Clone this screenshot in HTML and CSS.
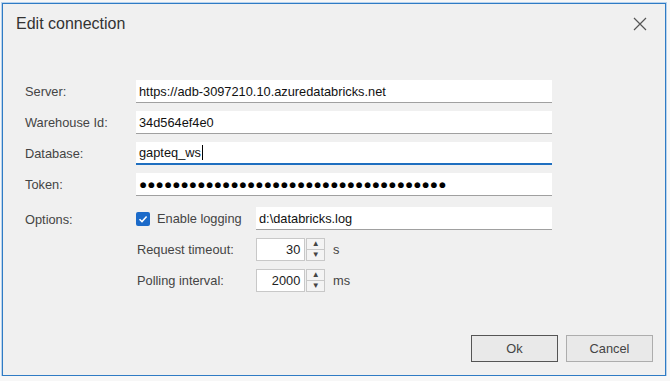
FILE: index.html
```html
<!DOCTYPE html>
<html lang="en">
<head>
    <meta charset="UTF-8">
    <title>Edit connection</title>
    <link rel="stylesheet" href="styles.css">
</head>
<body>
    <div class="window">
        <!-- title bar -->
        <div class="titlebar">
            <span class="title">Edit connection</span>
            <svg class="close" width="14" height="14" viewBox="0 0 14 14">
                <path d="M1 1 L13 13 M13 1 L1 13" stroke="#555" stroke-width="1.2" fill="none"/>
            </svg>
        </div>

        <!-- form -->
        <div class="form">
            <label>Server:</label>
            <div class="field">https://adb-3097210.10.azuredatabricks.net</div>

            <label>Warehouse Id:</label>
            <div class="field">34d564ef4e0</div>

            <label>Database:</label>
            <div class="field focused">gapteq_ws<span class="caret"></span></div>

            <label>Token:</label>
            <div class="field token">●●●●●●●●●●●●●●●●●●●●●●●●●●●●●●●●●●●●●</div>

            <label class="opt-label">Options:</label>
            <div class="options">
                <div class="log-row">
                    <span class="check">
                        <svg width="14" height="14" viewBox="0 0 14 14">
                            <rect x="0" y="0" width="14" height="14" rx="2" fill="#1b6ac9"/>
                            <path d="M3.5 7.2 L6 9.6 L10.6 4.6" stroke="#fff" stroke-width="1.5" fill="none"/>
                        </svg>
                        Enable logging
                    </span>
                    <div class="field">d:\databricks.log</div>
                </div>
                <div class="spin-row">
                    <span class="sub-label">Request timeout:</span>
                    <div class="spinner">
                        <div class="spin-value">30</div>
                        <div class="spin-btns"><span>&#9650;</span><span>&#9660;</span></div>
                    </div>
                    <span class="unit">s</span>
                </div>
                <div class="spin-row">
                    <span class="sub-label">Polling interval:</span>
                    <div class="spinner">
                        <div class="spin-value">2000</div>
                        <div class="spin-btns"><span>&#9650;</span><span>&#9660;</span></div>
                    </div>
                    <span class="unit">ms</span>
                </div>
            </div>
        </div>

        <!-- buttons -->
        <div class="buttons">
            <button class="btn default">Ok</button>
            <button class="btn">Cancel</button>
        </div>
    </div>
</body>
</html>
```

FILE: styles.css
```css
* { box-sizing: border-box; }
body {
    margin: 0;
    background: #f7f7f7;
    font-family: "Liberation Sans", Arial, sans-serif;
    font-size: 12.8px;
    color: #444;
}

/* dialog window */
.window {
    margin: 3px 0 0 2px;
    width: 664px;
    height: 373px;
    background: #f0f0f0;
    border: 1px solid #2f7bc4;
    box-shadow: 0 0 0 1px #b8d3ee;
    display: flex;
    flex-direction: column;
}

.titlebar {
    height: 40px;
    padding: 0 18px 0 13px;
    display: flex;
    align-items: center;
    justify-content: space-between;
}
.title {
    font-size: 16px;
    color: #333;
}

/* form grid */
.form {
    padding: 36px 0 0 22px;
    display: grid;
    grid-template-columns: 111px 416px;
    row-gap: 8px;
    align-items: center;
}
.form label { color: #444; }
.opt-label { align-self: start; padding-top: 5px; margin-top: 3px; }

.field {
    height: 23px;
    background: #fff;
    border-bottom: 1px solid #a0a0a0;
    padding: 0 3px;
    display: flex;
    align-items: center;
    color: #111;
    white-space: nowrap;
    overflow: hidden;
}
.field.focused { border-bottom: 2px solid #1f6fc0; }
.caret {
    display: inline-block;
    width: 1px;
    height: 15px;
    background: #000;
    margin-left: 1px;
}
.token {
    font-size: 13.6px;
    letter-spacing: 0.1px;
    color: #000;
}

/* options block */
.options {
    margin-top: 3px;
    display: flex;
    flex-direction: column;
    gap: 8px;
}
.log-row {
    display: grid;
    grid-template-columns: 120px 296px;
    align-items: center;
}
.check {
    display: flex;
    align-items: center;
    gap: 7px;
    color: #444;
}
.check svg { display: block; }

.spin-row {
    display: grid;
    grid-template-columns: 119px 69px auto;
    align-items: center;
    padding-left: 1px;
}
.spinner {
    display: flex;
    height: 23px;
}
.spin-value {
    width: 50px;
    background: #fff;
    border: 1px solid #c8c8c8;
    text-align: right;
    padding: 3px 4px 0 0;
    color: #222;
}
.spin-btns {
    width: 19px;
    margin-left: 1px;
    display: flex;
    flex-direction: column;
    border: 1px solid #c8c8c8;
    background: #f4f4f4;
}
.spin-btns span {
    flex: 1;
    font-size: 8px;
    color: #444;
    text-align: center;
    line-height: 10px;
}
.spin-btns span + span { border-top: 1px solid #c8c8c8; }
.unit { padding-left: 8px; }

/* bottom buttons */
.buttons {
    margin-top: auto;
    padding: 0 12px 13px 0;
    display: flex;
    justify-content: flex-end;
    gap: 8px;
}
.btn {
    width: 87px;
    height: 27px;
    background: #e9e9e9;
    border: 1px solid #adadad;
    font-family: "Liberation Sans", Arial, sans-serif;
    font-size: 12.8px;
    color: #444;
}
.btn.default { border: 1px solid #555; }
```
